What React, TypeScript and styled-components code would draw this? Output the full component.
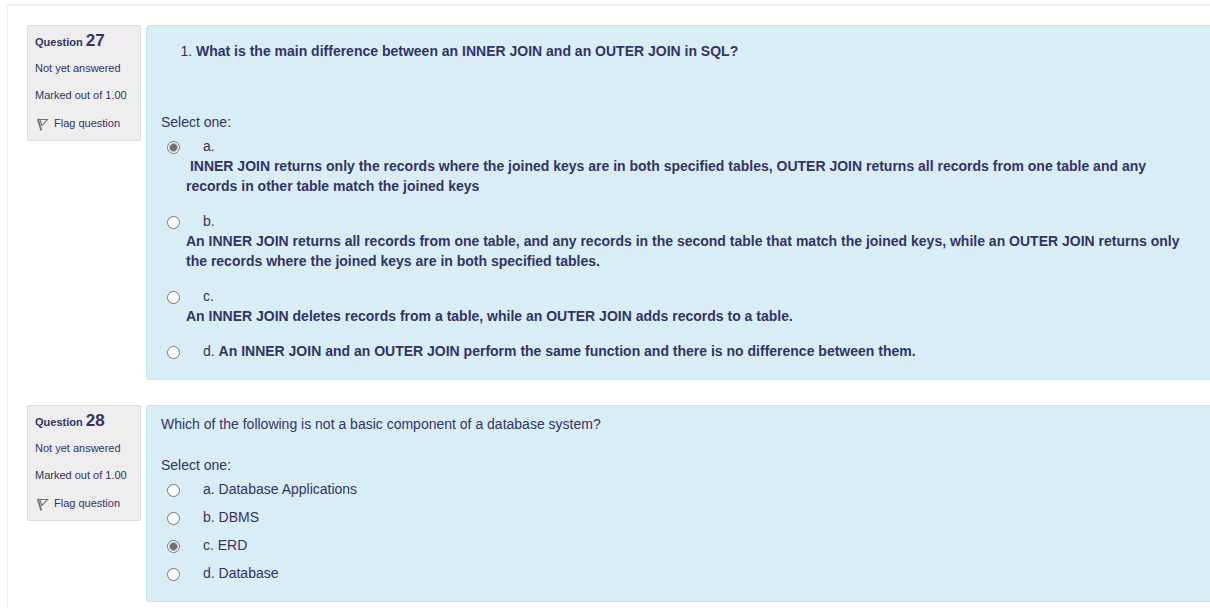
import React from "react";
import styled, { createGlobalStyle } from "styled-components";

const GlobalStyle = createGlobalStyle`
  *, *::before, *::after { box-sizing: border-box; }
  body {
    margin: 0;
    background: #fff;
    color: #333366;
    font: 14px/20px "Liberation Sans", Arial, sans-serif;
    overflow-x: hidden;
  }
`;

const Page = styled.main`
  margin: 4px 0 0 7px;
  padding: 19px 0 6px 19px;
  border: 1px solid #ebebeb;
  border-top: 2px solid #efefef;
  border-right: 0;
  border-bottom: 0;
  border-top-left-radius: 4px;
`;

const Question = styled.section`
  display: flex;
  align-items: flex-start;
  gap: 5px;
  margin-bottom: 25px;

  &:last-child {
    margin-bottom: 0;
  }
`;

const Info = styled.aside`
  flex: none;
  width: 114px;
  padding: 5px 7px 7px;
  border: 1px solid #dcdcdc;
  border-radius: 2px;
  background: #eee;
  font-size: 11px;
`;

const InfoTitle = styled.h3`
  margin: 0 0 6px;
  font-size: 11px;
  line-height: 20px;
`;

const Number = styled.span`
  font-size: 17px;
`;

const InfoLine = styled.p`
  margin: 0 0 7px;
`;

const FlagLink = styled.a`
  display: flex;
  align-items: center;
  gap: 5px;
  padding-top: 1px;
  color: inherit;
  text-decoration: none;
`;

const Content = styled.div<{ $roomy?: boolean }>`
  flex: 1;
  min-width: 0;
  padding: ${(p) => (p.$roomy ? "15px" : "8px")} 14px 18px;
  border: 1px solid #bce8f1;
  border-right: 0;
  border-radius: 4px 0 0 4px;
  background: #d9edf7;
`;

const Prompt = styled.div<{ $space: number }>`
  margin-bottom: ${(p) => p.$space}px;

  ol {
    margin: 0;
    padding-left: 35px;
  }
`;

const Answers = styled.fieldset<{ $gap: number }>`
  display: flex;
  flex-direction: column;
  gap: ${(p) => p.$gap}px;
  margin: 0;
  padding: 0;
  border: 0;
`;

const Legend = styled.legend`
  padding: 0;
  margin-bottom: 4px;
`;

const Option = styled.label`
  display: flex;
  align-items: flex-start;
`;

const Radio = styled.input`
  appearance: none;
  flex: none;
  width: 13px;
  height: 13px;
  margin: 5px 6px 0;
  border: 1px solid #767676;
  border-radius: 50%;
  background: #fff;

  &:checked {
    background: radial-gradient(circle, #6e6e6e 3px, #fff 5px);
  }
`;

const Letter = styled.span`
  padding-left: 17px;
`;

const Block = styled.strong`
  display: block;
`;

function Flag() {
  return (
    <svg width="14" height="16" viewBox="0 0 14 16" fill="none" stroke="#707070" aria-hidden="true">
      <path d="M2.800 4 L6.300 15.500" strokeWidth="1.800" />
      <path d="M2.500 4.500 H12.500 L7 10.500 L5 5" strokeWidth="1.100" />
    </svg>
  );
}

function QuestionInfo({ number }: { number: number }) {
  return (
    <Info>
      <InfoTitle>
        Question <Number>{number}</Number>
      </InfoTitle>
      <InfoLine>Not yet answered</InfoLine>
      <InfoLine>Marked out of 1.00</InfoLine>
      <FlagLink href="#">
        <Flag />
        Flag question
      </FlagLink>
    </Info>
  );
}

interface Answer {
  letter: string;
  body: React.ReactNode;
}

function AnswerList({ name, answers, selected, gap }: { name: string; answers: Answer[]; selected: string; gap: number }) {
  return (
    <Answers $gap={gap}>
      <Legend>Select one:</Legend>
      {answers.map((a) => (
        <Option key={a.letter}>
          <Radio type="radio" name={name} defaultChecked={a.letter === selected} />
          <span>
            <Letter>{a.letter}. </Letter>
            {a.body}
          </span>
        </Option>
      ))}
    </Answers>
  );
}

const joinAnswers: Answer[] = [
  {
    letter: "a",
    body: (
      <Block>
        {"\u00a0"}INNER JOIN returns only the records where the joined keys are in both specified tables, OUTER JOIN
        returns all records from one table and any records in other table match the joined keys
      </Block>
    ),
  },
  {
    letter: "b",
    body: (
      <Block>
        An INNER JOIN returns all records from one table, and any records in the second table that match the joined
        keys, while an OUTER JOIN returns only the records where the joined keys are in both specified tables.
      </Block>
    ),
  },
  {
    letter: "c",
    body: <Block>An INNER JOIN deletes records from a table, while an OUTER JOIN adds records to a table.</Block>,
  },
  {
    letter: "d",
    body: (
      <strong>An INNER JOIN and an OUTER JOIN perform the same function and there is no difference between them.</strong>
    ),
  },
];

const componentAnswers: Answer[] = [
  { letter: "a", body: "Database Applications" },
  { letter: "b", body: "DBMS" },
  { letter: "c", body: "ERD" },
  { letter: "d", body: "Database" },
];

export default function App() {
  return (
    <>
      <GlobalStyle />
      <Page>
        <Question>
          <QuestionInfo number={27} />
          <Content $roomy>
            <Prompt $space={51}>
              <ol>
                <li>
                  <strong>What is the main difference between an INNER JOIN and an OUTER JOIN in SQL?</strong>
                </li>
              </ol>
            </Prompt>
            <AnswerList name="q27" answers={joinAnswers} selected="a" gap={15} />
          </Content>
        </Question>
        <Question>
          <QuestionInfo number={28} />
          <Content>
            <Prompt $space={21}>Which of the following is not a basic component of a database system?</Prompt>
            <AnswerList name="q28" answers={componentAnswers} selected="c" gap={8} />
          </Content>
        </Question>
      </Page>
    </>
  );
}
